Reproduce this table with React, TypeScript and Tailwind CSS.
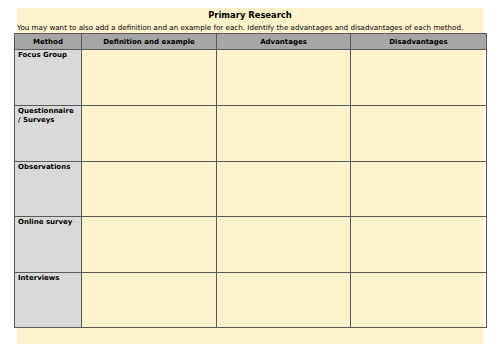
import React from 'react';

const METHODS = ['Focus Group', 'Questionnaire / Surveys', 'Observations', 'Online survey', 'Interviews'];
const HEADERS = ['Method', 'Definition and example', 'Advantages', 'Disadvantages'];

export default function App() {
  return (
    <div className="w-[500px] h-[353px] bg-white pt-[8px] pl-[17px]" style={{ fontFamily: '"DejaVu Sans", sans-serif' }}>
      <div className="w-[466px] h-[336px] bg-[#fff2cc] flex flex-col">
        <div className="h-[13px] text-[8.4px] font-bold leading-[13px] text-center text-black mt-[1px]">Primary Research</div>
        <div className="h-[11px] text-[7.15px] leading-[11px] text-black whitespace-nowrap">
          You may want to also add a definition and an example for each. Identify the advantages and disadvantages of each method.
        </div>
        <table className="-ml-[3px] w-[472px] border-collapse table-fixed text-black">
          <colgroup>
            <col className="w-[67px]" />
            <col className="w-[135px]" />
            <col className="w-[134px]" />
            <col className="w-[136px]" />
          </colgroup>
          <thead>
            <tr className="h-[16px]">
              {HEADERS.map(h => (
                <th key={h} className="bg-[#a6a6a6] border border-[#5a5a5a] text-[7px] font-bold leading-[10px] text-center p-0">{h}</th>
              ))}
            </tr>
          </thead>
          <tbody>
            {METHODS.map((m, i) => (
              <tr key={m} className={i === 1 ? 'h-[56px]' : 'h-[55.5px]'}>
                <td className="bg-[#d9d9d9] border border-[#5a5a5a] align-top px-[3px] pt-[1px] text-[7px] font-bold leading-[9px]">{m}</td>
                <td className="border border-[#5a5a5a]" />
                <td className="border border-[#5a5a5a]" />
                <td className="border border-[#5a5a5a]" />
              </tr>
            ))}
          </tbody>
        </table>
      </div>
    </div>
  );
}
